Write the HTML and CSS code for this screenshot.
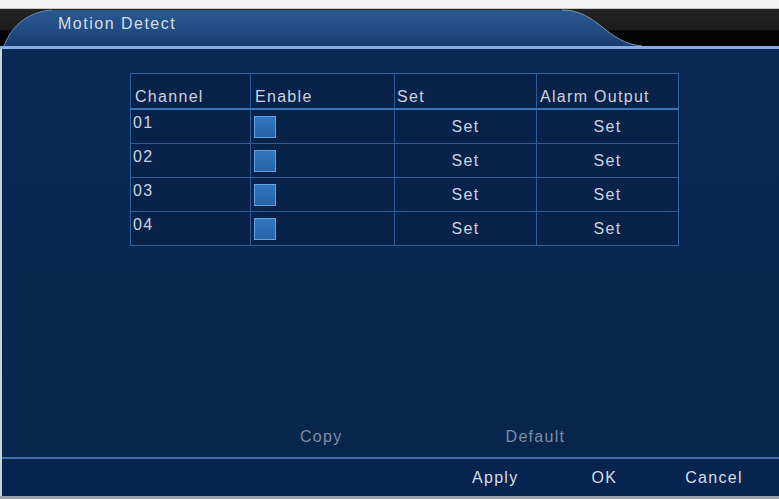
FILE: index.html
```html
<!DOCTYPE html>
<html>
<head>
<meta charset="utf-8">
<link rel="stylesheet" href="styles.css">
</head>
<body>
<div class="screen">
  <div class="topgap"></div>
  <div class="titlebar">
    <svg class="tab" width="779" height="37" viewBox="0 0 779 37">
      <defs>
        <linearGradient id="tg" x1="0" y1="0" x2="0" y2="1">
          <stop offset="0" stop-color="#2a5890"/>
          <stop offset="0.55" stop-color="#214c84"/>
          <stop offset="1" stop-color="#173c6e"/>
        </linearGradient>
      </defs>
      <path d="M4,37 C12,16 28,3 52,1 L562,1 C598,1 606,34 642,37 Z" fill="url(#tg)"/>
      <path d="M4,37 C12,16 28,3 52,1" fill="none" stroke="#6f8eb4" stroke-width="1"/>
      <path d="M562,1 C598,1 606,34 642,37" fill="none" stroke="#7f96b0" stroke-width="1"/>
    </svg>
    <span class="title">Motion Detect</span>
  </div>
  <div class="rule"></div>
  <div class="main">
    <div class="grid">
      <div class="row head">
        <div class="cell c1">Channel</div>
        <div class="cell c2">Enable</div>
        <div class="cell c3">Set</div>
        <div class="cell c4">Alarm Output</div>
      </div>
      <div class="row">
        <div class="cell c1 num">01</div>
        <div class="cell c2"><span class="box"></span></div>
        <div class="cell c3 mid">Set</div>
        <div class="cell c4 mid">Set</div>
      </div>
      <div class="row">
        <div class="cell c1 num">02</div>
        <div class="cell c2"><span class="box"></span></div>
        <div class="cell c3 mid">Set</div>
        <div class="cell c4 mid">Set</div>
      </div>
      <div class="row">
        <div class="cell c1 num">03</div>
        <div class="cell c2"><span class="box"></span></div>
        <div class="cell c3 mid">Set</div>
        <div class="cell c4 mid">Set</div>
      </div>
      <div class="row">
        <div class="cell c1 num">04</div>
        <div class="cell c2"><span class="box"></span></div>
        <div class="cell c3 mid">Set</div>
        <div class="cell c4 mid">Set</div>
      </div>
    </div>
    <div class="actions">
      <span class="dim copy">Copy</span>
      <span class="dim default">Default</span>
    </div>
  </div>
  <div class="rule2"></div>
  <div class="footer">
    <span class="btn apply">Apply</span>
    <span class="btn ok">OK</span>
    <span class="btn cancel">Cancel</span>
  </div>
  <div class="bottomedge"></div>
</div>
</body>
</html>
```

FILE: styles.css
```css
html, body {
  margin: 0;
  padding: 0;
  background: #f2f2f2;
}
.screen {
  width: 779px;
  height: 499px;
  display: flex;
  flex-direction: column;
  font-family: "Liberation Sans", Arial, sans-serif;
  font-size: 16px;
  letter-spacing: 1.3px;
  overflow: hidden;
}
.topgap {
  height: 9px;
  background: #f4f4f4;
  border-bottom: 1px solid #c8c8c8;
  box-sizing: border-box;
}
.titlebar {
  position: relative;
  height: 37px;
  background: linear-gradient(#242424 0, #1c1c1c 55%, #050505 60%, #020202 100%);
  display: flex;
  align-items: center;
}
.tab {
  position: absolute;
  left: 0;
  top: 0;
}
.title {
  position: relative;
  margin-left: 58px;
  margin-top: -8px;
  color: #d6dee9;
  font-size: 16px;
  letter-spacing: 1.5px;
}
.rule {
  height: 3px;
  background: #86ade2;
}
.main {
  flex: 1;
  background: linear-gradient(#0a2a55, #0a2850 60%, #08254c);
  border-left: 2px solid #c9d2dc;
  display: flex;
  flex-direction: column;
  padding-top: 24px;
  padding-left: 128px;
}
.grid {
  width: 547px;
  border: 1px solid #2f63a0;
  background: #09224a;
  display: flex;
  flex-direction: column;
}
.row {
  display: flex;
  height: 33px;
  border-top: 1px solid #2c5e9c;
}
.row.head {
  height: 34px;
  border-top: none;
  border-bottom: 2px solid #3c74b6;
}
.row.head + .row {
  border-top: none;
}
.cell {
  color: #cbd4e0;
  box-sizing: border-box;
  border-left: 1px solid #2c5e9c;
  display: flex;
  align-items: center;
  padding-left: 4px;
}
.cell.c1 { width: 119px; border-left: none; }
.cell.c2 { width: 144px; }
.cell.c3 { width: 142px; padding-left: 2px; }
.cell.c4 { width: 142px; padding-left: 3px; }
.row.head .cell {
  align-items: flex-end;
  padding-bottom: 2px;
}
.cell.num {
  align-items: flex-start;
  padding-top: 4px;
  padding-left: 2px;
}
.cell.mid {
  justify-content: center;
  padding-left: 0;
}
.box {
  width: 20px;
  height: 20px;
  background: linear-gradient(#2f76bf, #2564a8);
  border: 1px solid #63a2de;
  margin-left: -1px;
}
.actions {
  margin-top: auto;
  margin-left: -130px;
  height: 29px;
  display: flex;
  align-items: flex-start;
}
.dim {
  color: #7d8ca4;
}
.copy {
  margin-left: 300px;
}
.default {
  margin-left: 163px;
}
.rule2 {
  height: 2px;
  background: #3e6fae;
  border-left: 2px solid #c9d2dc;
}
.footer {
  height: 37px;
  background: #072450;
  border-left: 2px solid #c9d2dc;
  display: flex;
  align-items: center;
  color: #d6dde6;
}
.btn {
  display: inline-block;
}
.apply { margin-left: 470px; }
.ok { margin-left: 73px; }
.cancel { margin-left: 68px; }
.bottomedge {
  height: 3px;
  background: #9aa0a8;
}
```
